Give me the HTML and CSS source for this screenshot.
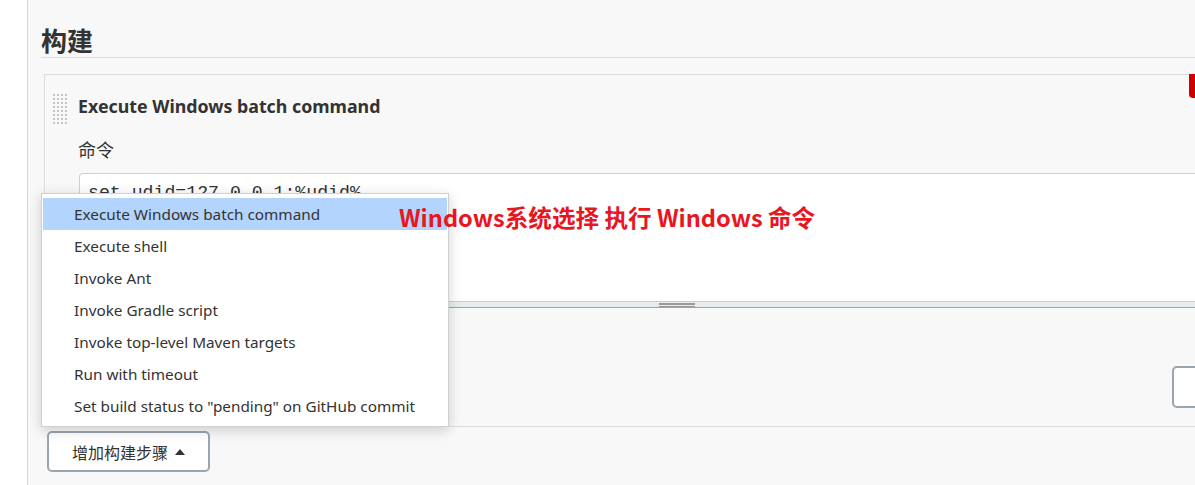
FILE: index.html
```html
<!DOCTYPE html>
<html lang="zh">
<head>
<meta charset="utf-8">
<title>构建</title>
<link rel="stylesheet" href="styles.css">
</head>
<body>
<div class="page">
  <aside class="gutter"></aside>
  <main class="main">
    <h2 class="section-title">构建</h2>
    <div class="chunk">
      <button class="delete-btn" aria-label="删除"></button>
      <div class="chunk-head">
        <span class="grip"></span>
        <span class="chunk-title">Execute Windows batch command</span>
      </div>
      <div class="chunk-body">
        <div class="field-label">命令</div>
        <div class="textarea-wrap">
          <div class="textarea">set udid=127.0.0.1:%udid%</div>
          <div class="ta-handle"><span class="ta-grip"></span></div>
        </div>
        <div class="chunk-actions">
          <button class="btn adv-btn" aria-label="高级"></button>
        </div>
      </div>
    </div>
    <div class="add-row">
      <ul class="menu">
        <li class="menu-item active">Execute Windows batch command</li>
        <li class="menu-item">Execute shell</li>
        <li class="menu-item">Invoke Ant</li>
        <li class="menu-item">Invoke Gradle script</li>
        <li class="menu-item">Invoke top-level Maven targets</li>
        <li class="menu-item">Run with timeout</li>
        <li class="menu-item">Set build status to "pending" on GitHub commit</li>
      </ul>
      <button class="btn add-btn">增加构建步骤<span class="caret"></span></button>
    </div>
    <div class="annotation">Windows系统选择 执行 Windows 命令</div>
  </main>
</div>
</body>
</html>
```

FILE: styles.css
```css
* { box-sizing: border-box; }

html, body {
  margin: 0;
  padding: 0;
  background: #f8f8f8;
}

body {
  font-family: "Noto Sans", "Noto Sans CJK SC", sans-serif;
  color: #333;
}

.page {
  display: flex;
  width: 1195px;
  height: 485px;
  overflow: hidden;
}

.gutter {
  flex: none;
  width: 28px;
  background: #fff;
  border-right: 1px solid #d6d6d6;
}

.main {
  flex: none;
  position: relative;
  width: 1257px;
  padding-left: 13px;
}

.section-title {
  margin: 22px 0 0;
  font-family: "Noto Sans CJK SC", sans-serif;
  font-size: 26px;
  font-weight: 700;
  line-height: 35px;
  color: #333;
  border-bottom: 1px solid #dcdcdc;
}

.chunk {
  position: relative;
  margin: 16px 0 0 3px;
  border: 1px solid #dcdcdc;
  padding: 18px 10px 18px 7px;
}

.delete-btn {
  position: absolute;
  top: -1px;
  left: 1144px;
  width: 30px;
  height: 24px;
  border: none;
  padding: 0;
  background: #cc0000;
  border-radius: 0 0 0 4px;
}

.chunk-head {
  display: flex;
  align-items: flex-start;
  gap: 10px;
}

.grip {
  flex: none;
  width: 16px;
  height: 32px;
  background-image: radial-gradient(circle, #c4c4c4 0.9px, transparent 1.1px);
  background-size: 4px 4px;
}

.chunk-title {
  font-size: 17.8px;
  font-weight: 700;
  line-height: 26px;
  color: #333;
}

.chunk-body {
  margin-left: 26px;
}

.field-label {
  margin-top: 12px;
  font-family: "Noto Sans CJK SC", sans-serif;
  font-size: 18px;
  font-weight: 400;
  line-height: 24px;
  color: #333;
}

.textarea-wrap {
  margin: 12px 0 0 1px;
}

.textarea {
  height: 128px;
  background: #fff;
  border: 1px solid #cfcfcf;
  border-bottom: none;
  border-radius: 4px 4px 0 0;
  padding: 7px 8px;
  font-family: "Liberation Mono", monospace;
  font-size: 18.2px;
  line-height: 24px;
  color: #333;
}

.ta-handle {
  display: flex;
  justify-content: center;
  align-items: center;
  height: 7px;
  background: #e6ebee;
  border-top: 1px solid #c9cdd0;
  border-bottom: 1px solid #9ba5ac;
}

.ta-grip {
  width: 36px;
  height: 4px;
  border-top: 2px solid #9a9a9a;
  border-bottom: 1px solid #9a9a9a;
}

.chunk-actions {
  display: flex;
  justify-content: flex-end;
  margin-top: 58px;
}

.btn {
  font-family: "Noto Sans CJK SC", sans-serif;
  background: #fff;
  border: 2px solid #9aa5ad;
  border-radius: 5px;
  color: #333;
}

.adv-btn {
  width: 102px;
  height: 42px;
  font-size: 16px;
}

.add-row {
  position: relative;
  margin: 4px 0 0 6px;
}

.add-btn {
  display: flex;
  align-items: center;
  width: 163px;
  height: 41px;
  padding: 0 0 0 23px;
  font-size: 16px;
  line-height: 20px;
}

.caret {
  width: 0;
  height: 0;
  margin-left: 7px;
  border-left: 5.5px solid transparent;
  border-right: 5.5px solid transparent;
  border-bottom: 6px solid #333;
}

.menu {
  position: absolute;
  left: -6px;
  bottom: calc(100% + 4px);
  width: 408px;
  margin: 0;
  padding: 4px 1px;
  list-style: none;
  background: #fff;
  border: 1px solid #d0d0d0;
  box-shadow: 0 3px 12px rgba(0, 0, 0, 0.18);
  z-index: 5;
}

.menu-item {
  height: 32px;
  padding: 1px 0 0 31px;
  font-size: 15.3px;
  line-height: 31px;
  color: #333;
  white-space: nowrap;
}

.menu-item.active {
  background: #b3d4fc;
}

.annotation {
  position: absolute;
  left: 371px;
  top: 202px;
  z-index: 10;
  font-family: "Noto Sans CJK SC", sans-serif;
  font-size: 23.6px;
  font-weight: 700;
  line-height: 30px;
  color: #e8161f;
  white-space: nowrap;
}
```
